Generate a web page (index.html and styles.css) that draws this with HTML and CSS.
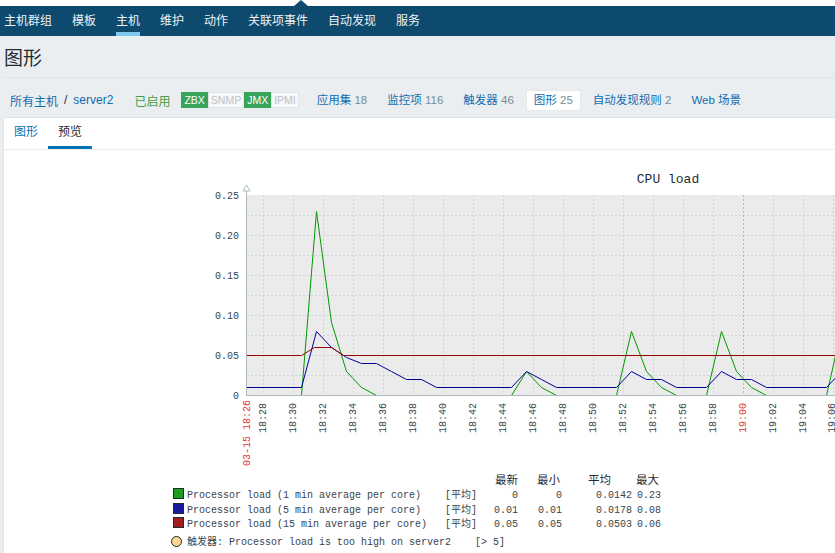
FILE: index.html
```html
<!DOCTYPE html>
<html lang="zh-CN">
<head>
<meta charset="utf-8">
<title>图形</title>
<link rel="stylesheet" href="styles.css">
</head>
<body>
<div class="topstrip"><span class="caret"></span></div>
<nav class="topnav">
  <a>主机群组</a><a>模板</a><a class="active">主机</a><a>维护</a><a>动作</a><a>关联项事件</a><a>自动发现</a><a>服务</a>
</nav>
<header class="pagehead"><h1>图形</h1></header>
<div class="crumbs">
  <a class="link">所有主机</a><span class="sep">/</span><a class="link">server2</a>
  <span class="enabled">已启用</span>
  <span class="status"><span class="st on">ZBX</span><span class="st">SNMP</span><span class="st on">JMX</span><span class="st">IPMI</span></span>
  <span class="items">
    <span class="item"><a class="link">应用集</a> <span class="num">18</span></span>
    <span class="item"><a class="link">监控项</a> <span class="num">116</span></span>
    <span class="item"><a class="link">触发器</a> <span class="num">46</span></span>
    <span class="item current"><a class="link">图形</a> <span class="num">25</span></span>
    <span class="item"><a class="link">自动发现规则</a> <span class="num">2</span></span>
    <span class="item"><a class="link">Web 场景</a></span>
  </span>
</div>
<main class="panel">
  <ul class="tabs"><li>图形</li><li class="active">预览</li></ul>
  <svg class="graph" width="831" height="403" viewBox="4 150 831 403" xmlns="http://www.w3.org/2000/svg">
    <text class="title" x="668" y="183">CPU load</text>
    <rect class="plot" x="246" y="195" width="620" height="200"/>
    <g class="hgrid">
      <line x1="247" y1="215.5" x2="866" y2="215.5"/>
      <line x1="247" y1="235.5" x2="866" y2="235.5"/>
      <line x1="247" y1="255.5" x2="866" y2="255.5"/>
      <line x1="247" y1="275.5" x2="866" y2="275.5"/>
      <line x1="247" y1="295.5" x2="866" y2="295.5"/>
      <line x1="247" y1="315.5" x2="866" y2="315.5"/>
      <line x1="247" y1="335.5" x2="866" y2="335.5"/>
      <line x1="247" y1="355.5" x2="866" y2="355.5"/>
      <line x1="247" y1="375.5" x2="866" y2="375.5"/>
    </g>
    <g class="vgrid">
      <line x1="263.5" y1="195" x2="263.5" y2="395"/>
      <line x1="293.5" y1="195" x2="293.5" y2="395"/>
      <line x1="323.5" y1="195" x2="323.5" y2="395"/>
      <line x1="353.5" y1="195" x2="353.5" y2="395"/>
      <line x1="383.5" y1="195" x2="383.5" y2="395"/>
      <line x1="413.5" y1="195" x2="413.5" y2="395"/>
      <line x1="443.5" y1="195" x2="443.5" y2="395"/>
      <line x1="473.5" y1="195" x2="473.5" y2="395"/>
      <line x1="503.5" y1="195" x2="503.5" y2="395"/>
      <line x1="533.5" y1="195" x2="533.5" y2="395"/>
      <line x1="563.5" y1="195" x2="563.5" y2="395"/>
      <line x1="593.5" y1="195" x2="593.5" y2="395"/>
      <line x1="623.5" y1="195" x2="623.5" y2="395"/>
      <line x1="653.5" y1="195" x2="653.5" y2="395"/>
      <line x1="683.5" y1="195" x2="683.5" y2="395"/>
      <line x1="713.5" y1="195" x2="713.5" y2="395"/>
      <line x1="773.5" y1="195" x2="773.5" y2="395"/>
      <line x1="803.5" y1="195" x2="803.5" y2="395"/>
      <line x1="833.5" y1="195" x2="833.5" y2="395"/>
    </g>
    <line class="vmain" x1="743.5" y1="195" x2="743.5" y2="395"/>

    <g class="series" transform="translate(0.5,0.5)">
      <polyline class="s1" points="246,395 301,395 316,211 331,322 346,371 361,387 376,395 511,395 526,371 541,387 556,395 616,395 631,331 646,371 661,387 676,395 706,395 721,331 736,371 751,387 766,395 826,395 841,329"/>
      <polyline class="s2" points="246,387 301,387 316,331 331,347 346,357 361,363 376,363 391,371 406,379 421,379 436,387 511,387 526,371 541,379 556,387 616,387 631,371 646,379 661,379 676,387 706,387 721,371 736,379 751,379 766,387 826,387 841,371"/>
      <polyline class="s3" points="246,355 301,355 314,347 331,347 343,355 866,355"/>
    </g>

    <line class="axis" x1="246.5" y1="190" x2="246.5" y2="396"/>
    <line class="axis" x1="246" y1="395.5" x2="866" y2="395.5"/>
    <polygon class="arrow" points="243,191 250,191 246.5,185"/>

    <g class="ylab">
      <text x="239" y="199">0.25</text>
      <text x="239" y="239">0.20</text>
      <text x="239" y="279">0.15</text>
      <text x="239" y="319">0.10</text>
      <text x="239" y="359">0.05</text>
      <text x="239" y="399">0</text>
    </g>

    <g class="xlab">
      <text class="hl" transform="translate(250,400) rotate(-90)">03-15 18:26</text>
      <text transform="translate(266,403) rotate(-90)">18:28</text>
      <text transform="translate(296,403) rotate(-90)">18:30</text>
      <text transform="translate(326,403) rotate(-90)">18:32</text>
      <text transform="translate(356,403) rotate(-90)">18:34</text>
      <text transform="translate(386,403) rotate(-90)">18:36</text>
      <text transform="translate(416,403) rotate(-90)">18:38</text>
      <text transform="translate(446,403) rotate(-90)">18:40</text>
      <text transform="translate(476,403) rotate(-90)">18:42</text>
      <text transform="translate(506,403) rotate(-90)">18:44</text>
      <text transform="translate(536,403) rotate(-90)">18:46</text>
      <text transform="translate(566,403) rotate(-90)">18:48</text>
      <text transform="translate(596,403) rotate(-90)">18:50</text>
      <text transform="translate(626,403) rotate(-90)">18:52</text>
      <text transform="translate(656,403) rotate(-90)">18:54</text>
      <text transform="translate(686,403) rotate(-90)">18:56</text>
      <text transform="translate(716,403) rotate(-90)">18:58</text>
      <text class="hl" transform="translate(746,403) rotate(-90)">19:00</text>
      <text transform="translate(776,403) rotate(-90)">19:02</text>
      <text transform="translate(806,403) rotate(-90)">19:04</text>
      <text transform="translate(835,403) rotate(-90)">19:06</text>
    </g>

    <g class="legend">
      <text class="hd" x="518" y="484">最新</text>
      <text class="hd" x="560" y="484">最小</text>
      <text class="hd" x="611" y="484">平均</text>
      <text class="hd" x="659" y="484">最大</text>

      <rect class="sq c1" x="173.5" y="488.5" width="10" height="10"/>
      <text x="187" y="498">Processor load (1 min average per core)</text>
      <text x="445" y="498">[平均]</text>
      <text class="v" x="518" y="498">0</text>
      <text class="v" x="562" y="498">0</text>
      <text class="v" x="632" y="498">0.0142</text>
      <text class="v" x="661" y="498">0.23</text>

      <rect class="sq c2" x="173.5" y="503.5" width="10" height="10"/>
      <text x="187" y="512.5">Processor load (5 min average per core)</text>
      <text x="445" y="512.5">[平均]</text>
      <text class="v" x="518" y="512.5">0.01</text>
      <text class="v" x="562" y="512.5">0.01</text>
      <text class="v" x="632" y="512.5">0.0178</text>
      <text class="v" x="661" y="512.5">0.08</text>

      <rect class="sq c3" x="173.5" y="517.5" width="10" height="10"/>
      <text x="187" y="527">Processor load (15 min average per core)</text>
      <text x="445" y="527">[平均]</text>
      <text class="v" x="518" y="527">0.05</text>
      <text class="v" x="562" y="527">0.05</text>
      <text class="v" x="632" y="527">0.0503</text>
      <text class="v" x="661" y="527">0.06</text>

      <circle class="trig" cx="176.5" cy="541.5" r="5"/>
      <text x="187" y="545">触发器: Processor load is too high on server2</text>
      <text x="475" y="545">[&gt; 5]</text>
    </g>
  </svg>
</main>
</body>
</html>
```

FILE: styles.css
```css
* { box-sizing: border-box; }
html, body { margin: 0; padding: 0; }
body {
  width: 835px;
  height: 553px;
  overflow: hidden;
  background: #ebeef0;
  color: #1f2c33;
  font-family: "Liberation Sans", "Noto Sans CJK SC", sans-serif;
  font-size: 12px;
}

/* top strip + nav */
.topstrip { height: 6px; background: #ffffff; }
.caret {
  display: block;
  width: 0;
  height: 0;
  margin-left: 294px;
  border-left: 7px solid transparent;
  border-right: 7px solid transparent;
  border-bottom: 6px solid #0d4a6e;
}
.topnav {
  height: 30px;
  background: #0d4a6e;
  display: flex;
  gap: 20px;
  padding-left: 4px;
}
.topnav a {
  color: #eef3f6;
  line-height: 30px;
  font-size: 12px;
  text-decoration: none;
}
.topnav a.active { box-shadow: inset 0 -4px 0 #7cc8f2; }

/* page header */
.pagehead h1 {
  margin: 0 0 0 3px;
  padding: 4px 0 0 1px;
  font-size: 19px;
  font-weight: normal;
  line-height: 37px;
  color: #1f2c33;
  border-bottom: 1px solid #dde2e5;
}

/* breadcrumbs row */
.crumbs {
  display: flex;
  align-items: center;
  height: 39px;
  padding: 12px 0 7px 10px;
}
.link { color: #0f6db0; text-decoration: none; }
.sep { margin: 0 6px; color: #1f2c33; }
.enabled { margin-left: 21px; color: #429e47; }
.status { display: flex; margin-left: 11px; height: 16px; }
.st {
  font-size: 10.5px;
  line-height: 14px;
  padding: 0 2px;
  border: 1px solid #dfe4e7;
  background: #f6f7f8;
  color: #bcc4c8;
}
.st.on { background: #3aa35b; border-color: #3aa35b; color: #ffffff; }
.items { display: flex; gap: 4px; margin-left: 10px; font-size: 11.5px; }
.item {
  height: 21px;
  line-height: 19px;
  padding: 0 7px;
  border: 1px solid transparent;
}
.item.current { background: #ffffff; border-color: #e4e8ea; }
.num { color: #768d99; }

/* panel */
.panel {
  margin-left: 3px;
  height: 436px;
  background: #ffffff;
  border-top: 1px solid #dfe4e7;
  border-left: 1px solid #dfe4e7;
}
.tabs {
  display: flex;
  list-style: none;
  margin: 0;
  padding: 0;
  border-bottom: 1px solid #ebeef0;
}
.tabs li {
  padding: 0 10px;
  line-height: 28px;
  border-bottom: 3px solid transparent;
  color: #0275b8;
}
.tabs li.active { color: #1f2c33; border-bottom-color: #0275b8; }

/* graph */
.graph { display: block; }
.graph text {
  font-family: "Liberation Mono", "Noto Sans CJK SC", monospace;
  font-size: 10px;
  fill: #3a4449;
}
.graph .title { font-size: 13px; text-anchor: middle; fill: #1f2c33; }
.plot { fill: #ebebeb; }
.hgrid line, .vgrid line {
  stroke: #ccd5d9;
  stroke-width: 1;
  stroke-dasharray: 2 2;
}
.vmain { stroke: #acbbc2; stroke-width: 1; stroke-dasharray: 2 2; }
.axis { stroke: #acbbc2; stroke-width: 1; }
.arrow { fill: #ffffff; stroke: #acbbc2; stroke-width: 1; }
.series polyline { fill: none; stroke-width: 1; }
.s1 { stroke: #009900; }
.s2 { stroke: #000099; }
.s3 { stroke: #990000; }
.graph .ylab text { text-anchor: end; }
.graph .xlab text { text-anchor: end; }
.graph .xlab text.hl { fill: #e33734; }
.graph .legend .hd { text-anchor: end; font-size: 11.5px; fill: #1f2c33; }
.graph .legend .v { text-anchor: end; }
.sq { stroke: #1f2c33; stroke-width: 1; }
.c1 { fill: #1e9e1e; }
.c2 { fill: #1a1a9e; }
.c3 { fill: #a01e1e; }
.trig { fill: #ffd590; stroke: #1f2c33; stroke-width: 1; }
```
